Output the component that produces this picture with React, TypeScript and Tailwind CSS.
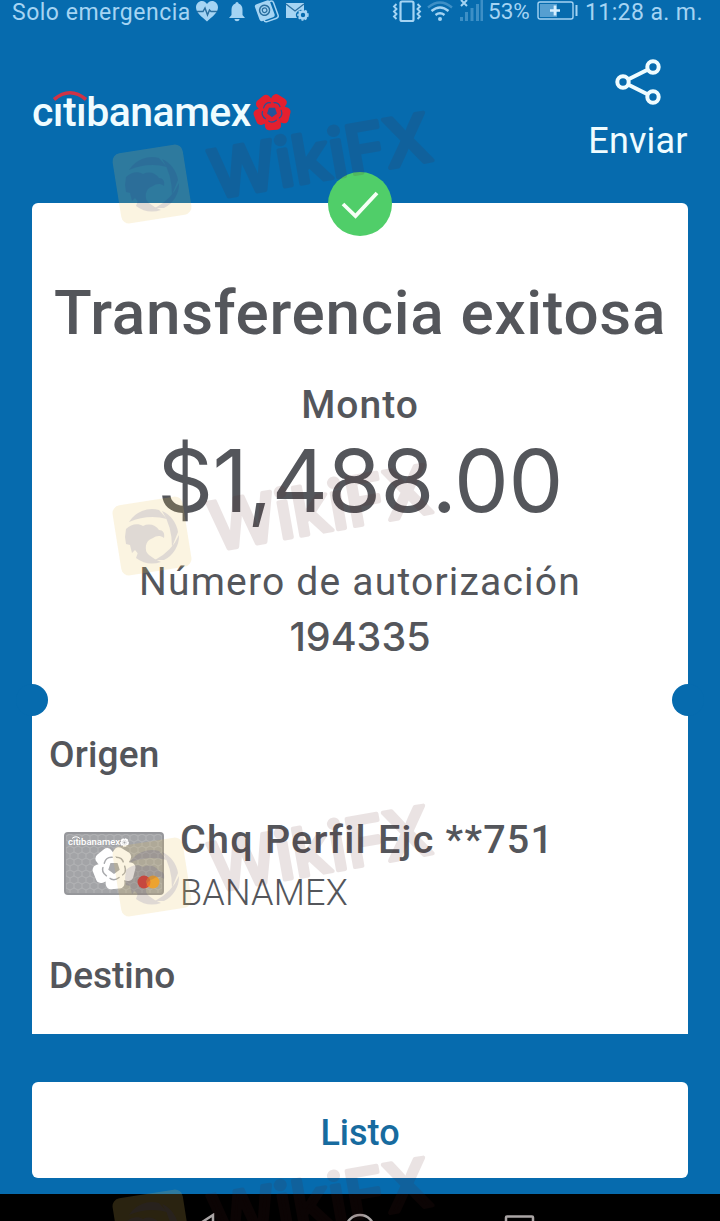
import type { ReactNode } from "react";

const PETALS = [0, 72, 144, 216, 288];
const WATERMARKS = [0, 352, 693, 1045];

function Flower({ className, hole }: { className: string; hole: string }) {
    return (
        <svg viewBox="-20 -20 40 40" className={className}>
            {PETALS.map((a) => (
                <g key={a} transform={`rotate(${a + 32})`}>
                    <rect x="-8.500" y="-19" width="17" height="13" rx="4.500" fill="currentColor" />
                    <path d="M-7 -7L8 -7L5 -2L-5 -2Z" fill="currentColor" />
                    <path d="M-4 -9Q1 -12.500 5 -8.500" fill="none" stroke={hole} strokeWidth="1.300" strokeLinecap="round" />
                </g>
            ))}
            <path d="M0 5.500L5.200 1.700L3.200 -4.500H-3.200L-5.200 1.700Z" fill={hole} />
        </svg>
    );
}

function StatusBar() {
    return (
        <div className="flex h-[26px] items-start pl-3 text-[#a5d4f3] text-[23px] leading-[26px] whitespace-nowrap">
            <span className="w-[183px] tracking-[0.5px]">Solo emergencia</span>
            <svg viewBox="0 0 114 24" className="w-[114px] h-6 shrink-0" fill="currentColor">
                <path d="M12 21.5C7 17 1 12.500 1 7.500C1 3.500 4 1 7 1C9.500 1 11 2.500 12 4C13 2.500 14.500 1 17 1C20 1 23 3.500 23 7.500C23 12.500 17 17 12 21.500Z" />
                <path d="M2 11.500H8L10 8L12.500 15L14.500 10L16 11.500H22" fill="none" stroke="#2b6f9f" strokeWidth="1.500" />
                <path d="M42 2C43 2 43.500 2.800 43.500 3.500C46.500 4.300 47.500 7 47.500 10V15L50 18H34L36.500 15V10C36.500 7 37.500 4.300 40.500 3.500C40.500 2.800 41 2 42 2ZM39.500 19H44.500C44.500 22 39.500 22 39.500 19Z" />
                <g transform="rotate(-20 72 11)">
                    <rect x="66" y="3" width="15" height="18" rx="2.500" fill="none" stroke="currentColor" strokeWidth="1.500" />
                    <rect x="62" y="1" width="16" height="18" rx="2.500" />
                    <circle cx="70" cy="9.500" r="5" fill="none" stroke="#2b6f9f" strokeWidth="1.500" />
                    <circle cx="70" cy="9.500" r="2.300" fill="none" stroke="#2b6f9f" strokeWidth="1.200" />
                </g>
                <path d="M91 3H109V11A5 5 0 0 0 102 18H91Z" />
                <path d="M91 4L100 11L109 4" fill="none" stroke="#2b6f9f" strokeWidth="1.300" />
                <circle cx="108" cy="15" r="3.500" fill="none" stroke="currentColor" strokeWidth="2.600" />
                <circle cx="108" cy="15" r="5" fill="none" stroke="currentColor" strokeWidth="1.400" strokeDasharray="2 1.600" />
            </svg>
            <svg viewBox="0 0 92 24" className="ml-[82px] w-[92px] h-6 shrink-0" fill="none" stroke="currentColor">
                <rect x="9.500" y="1.500" width="13" height="19.500" rx="1.500" strokeWidth="2.200" />
                <path d="M5.500 4L3 6.500L5.500 9L3 11.500L5.500 14L3 16.500L5.500 19M26.500 4L29 6.500L26.500 9L29 11.500L26.500 14L29 16.500L26.500 19" strokeWidth="1.900" />
                <g strokeWidth="2.300">
                    <path d="M37 7.500Q49 -2.500 61 7.500" opacity=".35" />
                    <path d="M40.500 11Q49 4 57.500 11" />
                    <path d="M44.500 15Q49 11.500 53.500 15" />
                </g>
                <circle cx="49" cy="19" r="2" fill="currentColor" stroke="none" />
                <path d="M70 0L76 6M76 0L70 6" strokeWidth="2" />
                <g opacity=".35" strokeWidth="3">
                    <path d="M70.500 17V21" />
                    <path d="M75.500 12V21" />
                    <path d="M81 8V21" />
                    <path d="M86.500 4V21" />
                    <path d="M91 0V21" />
                </g>
            </svg>
            <span className="ml-[5px] w-[49px] text-[22.5px] leading-[23px]">53%</span>
            <svg viewBox="0 0 42 24" className="w-[42px] h-6 shrink-0">
                <rect x="1" y="2" width="35" height="17" rx="2" fill="none" stroke="currentColor" strokeWidth="1.400" />
                <rect x="3" y="4" width="17" height="13" fill="currentColor" opacity=".5" />
                <path d="M18 5.500V15.500M13 10.500H23" stroke="#d6efff" strokeWidth="2.700" />
                <path d="M39.500 5V16" stroke="currentColor" strokeWidth="2" />
            </svg>
            <span className="ml-[6px] tracking-[0.4px]">11:28 a. m.</span>
        </div>
    );
}

function Brand() {
    return (
        <div className="relative flex h-12 items-center text-[#effcff]">
            <span aria-label="citibanamex" className="w-[221px] text-[41px] leading-[48px] font-medium -tracking-[0.55px]">
                cıtıbanamex
            </span>
            <svg viewBox="0 0 36 12" className="absolute left-[20px] top-[2px] w-9 h-3">
                <path d="M2 9.500Q18 -4 34 9.500" fill="none" stroke="#cf3346" strokeWidth="3.600" />
            </svg>
            <Flower className="size-[38px] text-[#e3202f]" hole="#24549a" />
        </div>
    );
}

function ShareButton() {
    return (
        <button className="flex w-[100px] flex-col items-center text-[#effcff]">
            <svg viewBox="0 0 48 48" className="size-12" fill="none" stroke="currentColor" strokeWidth="4">
                <circle cx="9" cy="24" r="5.700" />
                <circle cx="39" cy="9" r="5.700" />
                <circle cx="39" cy="39" r="5.700" />
                <path d="M14 21.500L34 11.500M14 26.500L34 36.500" />
            </svg>
            <span className="mt-[14px] text-[36px] leading-[42px] tracking-[0.2px]">Enviar</span>
        </button>
    );
}

function BankCard() {
    return (
        <div className="relative h-[63px] w-[100px] shrink-0 overflow-hidden rounded-[4px] border-2 border-[#96979b] bg-[#a3a4a7]">
            <svg viewBox="0 0 96 59" className="absolute inset-0 size-full">
                <defs>
                    <pattern id="hex" width="8" height="12" patternUnits="userSpaceOnUse">
                        <path d="M0 2L4 0L8 2V6L4 8L0 6ZM4 8V12" fill="none" stroke="#b6b7b9" strokeWidth=".8" />
                    </pattern>
                </defs>
                <rect width="96" height="59" fill="url(#hex)" />
                <path d="M6 4.500Q10 1 14 4.500" fill="none" stroke="#fff" strokeWidth="1" />
                <circle cx="78" cy="48" r="6.500" fill="#dc3430" />
                <circle cx="87" cy="48" r="6.500" fill="#ee9d27" />
                <path d="M82.500 43.300A6.500 6.500 0 0 1 82.500 52.700A6.500 6.500 0 0 1 82.500 43.300Z" fill="#ec6526" />
            </svg>
            <div className="relative flex items-center pl-[2px] pt-[3px] text-white">
                <span className="text-[9.5px] leading-[10px] font-medium">cıtıbanamex</span>
                <Flower className="size-[9px]" hole="#a3a4a7" />
            </div>
            <Flower className="absolute left-[26px] top-[12px] size-[44px] text-white" hole="#a9aaad" />
        </div>
    );
}

function Ticket({ children }: { children: ReactNode }) {
    return (
        <main className="relative mx-8 h-[831px] shrink-0 rounded-t-[6px] bg-white text-[#54565b]">
            <div className="absolute left-[296px] -top-[31px] flex size-16 items-center justify-center rounded-full bg-[#50ce69]">
                <svg viewBox="0 0 40 32" className="w-10 h-8" fill="none" stroke="#f6fff6" strokeWidth="3.800">
                    <path d="M3 16L15.500 28L37 5" />
                </svg>
            </div>
            <span className="absolute -left-4 top-[481px] size-8 rounded-full bg-[#066bae]" />
            <span className="absolute -right-4 top-[481px] size-8 rounded-full bg-[#066bae]" />
            {children}
        </main>
    );
}

function Watermark() {
    return (
        <svg viewBox="0 0 720 1221" className="pointer-events-none absolute inset-0 h-[1221px] w-[720px]">
            {WATERMARKS.map((y) => (
                <g key={y} transform={`translate(0 ${y})`}>
                    <g transform="translate(152 184)">
                        <rect x="-35.500" y="-35.500" width="71" height="71" rx="8" fill="#e8c458" opacity=".18" transform="rotate(-9)" />
                        <g fill="#20207a" opacity=".12">
                            <path d="M-23 -14A27 27 0 0 1 7 -26L15 -17Q-4 -22 -23 -14Z" />
                            <path d="M10 -25A27 27 0 0 1 26 -4L20 11Q20 -10 10 -25Z" />
                            <path d="M27 -1A27 27 0 0 1 12 24L3 24Q20 15 27 -1Z" />
                            <path d="M9 26A27 27 0 0 1 -16 22L-11 8Q-6 20 9 26Z" />
                            <path d="M-26 -7C-21 -12 -14 -13 -9 -10C-3 -13 4 -11 7 -6C11 -6 13 -3 12 2C8 -1 4 0 1 2C-5 4 -8 9 -5 18L-10 14L-12 20L-17 14L-20 17L-22 9L-26 8L-27 1Z" />
                        </g>
                    </g>
                    <text
                        transform="translate(214 199) rotate(-10)"
                        className="font-['Inter'] font-medium"
                        fontSize="67"
                        textLength="224"
                        fill="#5a2020"
                        stroke="#5a2020"
                        strokeWidth="4"
                        strokeLinejoin="round"
                        opacity=".12"
                    >
                        WikiFX
                    </text>
                </g>
            ))}
        </svg>
    );
}

export default function App() {
    return (
        <div className="relative flex h-[1221px] w-[720px] flex-col overflow-hidden bg-[#066bae] font-['Roboto',sans-serif]">
            <StatusBar />
            <header className="flex h-[177px] items-start justify-between pl-8 pr-8">
                <div className="pt-[62px]">
                    <Brand />
                </div>
                <div className="pt-[32px]">
                    <ShareButton />
                </div>
            </header>
            <Ticket>
                <div className="flex flex-col items-center whitespace-nowrap pt-[73px]">
                    <h1 className="text-[62px] leading-[74px] font-medium tracking-[0.7px]">Transferencia exitosa</h1>
                    <p className="mt-8 text-[39px] leading-[46px] font-medium tracking-[1px]">Monto</p>
                    <p className="mt-[5px] font-['Inter'] text-[87px] leading-[96px] font-normal -tracking-[0.6px]">$1,488.00</p>
                    <p className="mt-[30px] text-[39px] leading-[46px] font-normal tracking-[1.2px]">Número de autorización</p>
                    <p className="mt-[9px] font-['Inter'] text-[39.5px] leading-[46px] font-medium">194335</p>
                </div>
                <h2 className="mt-[73px] pl-[17px] text-[37px] leading-[44px] font-medium tracking-[0.2px]">Origen</h2>
                <div className="mt-[40px] flex pl-8 whitespace-nowrap">
                    <div className="pt-[15px]">
                        <BankCard />
                    </div>
                    <div className="pl-4">
                        <p className="text-[39.5px] leading-[46px] font-medium tracking-[1.25px]">Chq Perfil Ejc **751</p>
                        <p className="mt-2 text-[36px] leading-[44px] font-light tracking-[0.2px]">BANAMEX</p>
                    </div>
                </div>
                <h2 className="mt-[39px] pl-[17px] text-[37px] leading-[44px] font-medium">Destino</h2>
            </Ticket>
            <button className="mx-8 mt-12 h-24 shrink-0 rounded-[6px] bg-white pt-1.5 text-[36px] font-medium text-[#176b9f]">
                Listo
            </button>
            <nav className="mt-4 flex h-[27px] shrink-0 bg-black pl-[190px] pt-[19px]">
                <svg viewBox="0 0 350 30" className="h-[30px] w-[350px]" fill="none" stroke="#aaa5a5" strokeWidth="2.500">
                    <path d="M3 15L23 2V28Z" />
                    <circle cx="170" cy="16" r="14" />
                    <rect x="316" y="3.500" width="27" height="27" rx="1" />
                </svg>
            </nav>
            <Watermark />
        </div>
    );
}
